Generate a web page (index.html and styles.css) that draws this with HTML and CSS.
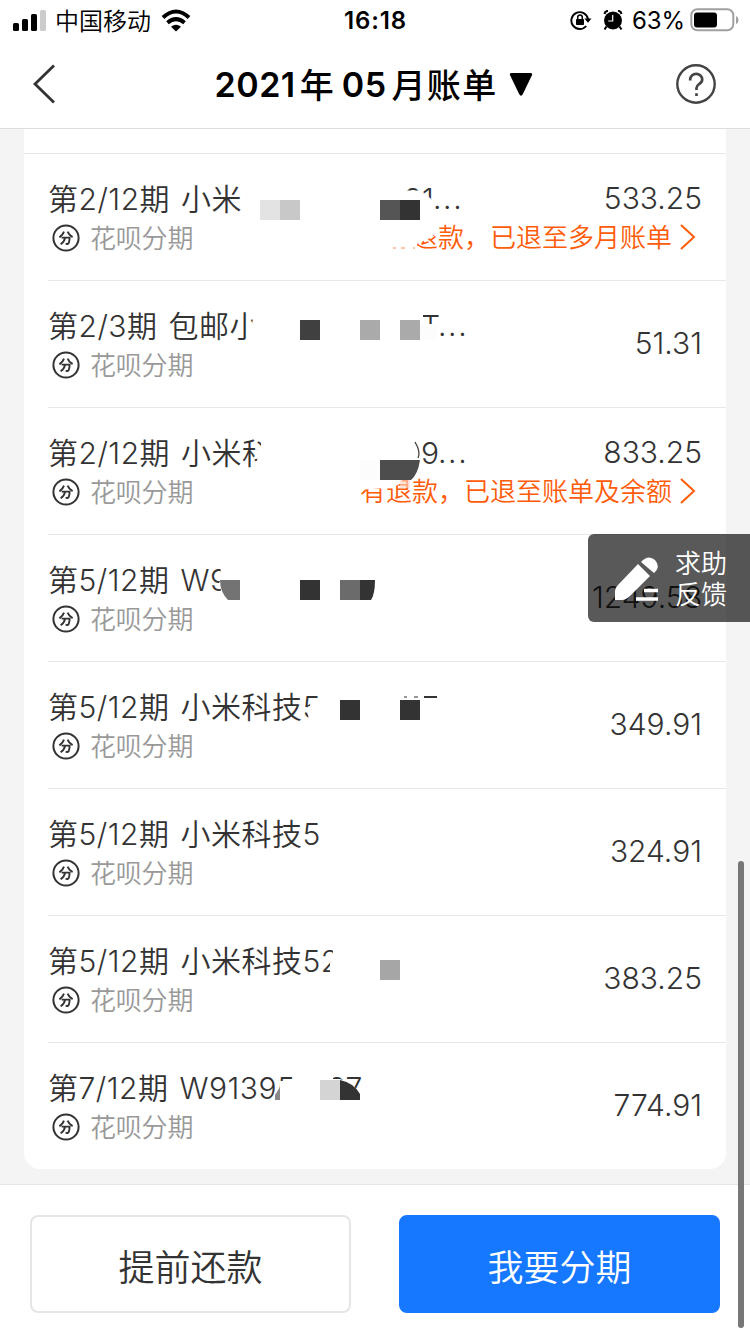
FILE: index.html
```html
<!DOCTYPE html>
<html lang="zh-CN">
<head>
<meta charset="utf-8">
<title>2021年05月账单</title>
<link rel="stylesheet" href="styles.css">
</head>
<body>
<svg class="defs" width="0" height="0"><defs>
<symbol id="fen" viewBox="0 0 28 28"><circle cx="14" cy="14" r="12.6" fill="none" stroke="#333" stroke-width="2"/><path d="M12 7.6Q10.8 11 7.4 13.4M15.6 7.6Q17 11.2 20.6 13.2M9.6 13.6H17.6Q17.4 19 16 19.8Q15 20.2 13.6 19.7M13 13.8Q12.4 18 8.6 20.2" fill="none" stroke="#333" stroke-width="1.9"/></symbol>
<symbol id="more" viewBox="0 0 16 26"><path d="M1 1L14 13L1 25" fill="none" stroke="#ff5c0a" stroke-width="2"/></symbol>
</defs></svg>
<div class="screen">
  <header class="status">
    <div class="status-left">
      <svg width="34" height="22" viewBox="0 0 34 22"><rect x="1" y="14" width="6" height="8" rx="1.5"/><rect x="10" y="10" width="6" height="12" rx="1.5"/><rect x="19" y="5" width="6" height="17" rx="1.5"/><rect x="28" y="1" width="6" height="21" rx="1.5" fill="#ccc"/></svg>
      <span class="carrier">中国移动</span>
      <svg class="wifi" width="30" height="23" viewBox="0 0 30 23"><path d="M2 8.5Q15-3.5 28 8.5M6.5 13.8Q15 6.5 23.5 13.8" fill="none" stroke="#000" stroke-width="4"/><path d="M10 17.8Q15 13.5 20 17.8L15 22.5Z"/></svg>
    </div>
    <span class="clock">16:18</span>
    <div class="status-right">
      <svg width="22" height="20" viewBox="0 0 22 20"><path d="M16.2 16A8.4 8.4 0 1 1 18 9" fill="none" stroke="#000" stroke-width="1.9"/><path d="M14.3 8.5H21.5L18 12.8Z"/><rect x="6" y="9" width="8" height="6" rx=".8"/><path d="M7.7 9V7.2A2.3 2.3 0 0 1 12.3 7.2V9" fill="none" stroke="#000" stroke-width="1.5"/></svg>
      <svg class="alarm" width="20" height="20" viewBox="0 0 20 20"><circle cx="10" cy="10.5" r="9"/><path d="M1.5 4Q2 1 5 .8M18.5 4Q18 1 15 .8M3.5 16.5L1.5 19.5M16.5 16.5L18.5 19.5" fill="none" stroke="#000" stroke-width="2"/><path d="M9.7 5V11H5.2" fill="none" stroke="#fff" stroke-width="1.2"/></svg>
      <span class="percent">63%</span>
      <svg width="50" height="24" viewBox="0 0 50 24"><rect x="1.3" y="1.3" width="42" height="21" rx="6" fill="none" stroke="#a0a0a0" stroke-width="2"/><rect x="4" y="4.5" width="23" height="15" rx="3"/><path d="M46 8Q48.5 9 48.5 12T46 16Z" fill="#a0a0a0"/></svg>
    </div>
  </header>
  <nav class="nav">
    <svg width="24" height="40" viewBox="0 0 24 40"><path d="M22 1.5L3 20L22 38.5" fill="none" stroke="#333" stroke-width="2.8"/></svg>
    <h1 class="heading"><span class="h-year">2021</span><span>年</span><span class="h-month">05</span><span class="h-rest">月账单</span><svg width="24" height="25" viewBox="0 0 24 25"><path d="M2.5 1H21.5Q24 1 22.8 3.5L14 21.8Q12 25.5 10 21.8L1.2 3.5Q0 1 2.5 1Z"/></svg></h1>
    <svg width="40" height="40" viewBox="0 0 40 40"><circle cx="20" cy="20" r="18.7" fill="none" stroke="#444" stroke-width="2.4"/><path d="M14.2 16.5V15.5A6 5.6 0 0 1 26.2 15.5Q26.2 18.3 23.2 20Q20.5 21.8 20.5 24V26M20.5 29.2V32" fill="none" stroke="#444" stroke-width="2.7"/></svg>
  </nav>
  <main class="content">
    <section class="card">
      <div class="previous"></div>
      <article class="row first">
        <div class="info"><div class="name">第2/12期 小米</div><div class="kind"><svg><use href="#fen"/></svg>花呗分期</div></div>
        <div class="side"><div class="amount">533.25</div><div class="note">有退款，已退至多月账单<svg><use href="#more"/></svg></div></div>
        <svg class="mosaic" viewBox="24 153 702 127"><text x="404" y="210">91</text><text x="433" y="209" letter-spacing="1.6">...</text><path d="M400 190.5H418L422 193L427 195L432 200V216H400Z" fill="#fff"/><path d="M380 220H437V232L430 238L417 244L419 254H380Z" fill="#fff"/><path d="M393 248h3M401 248h4M413 248h2" stroke="#ff8a50"/><path fill="#e3e3e3" d="M260 200h20v20h-20z"/><path fill="#c8c8c8" d="M280 200h20v20h-20z"/><path fill="#555" d="M380 200h20v20h-20z"/><path fill="#333" d="M400 200h20v20h-20z"/></svg>
      </article>
      <article class="row">
        <div class="info"><div class="name">第2/3期 包邮小</div><div class="kind"><svg><use href="#fen"/></svg>花呗分期</div></div>
        <div class="side"><div class="amount">51.31</div></div>
        <svg class="mosaic" viewBox="24 280 702 127"><text x="421" y="337">T</text><text x="438" y="336" letter-spacing="1.6">...</text><path d="M254 310H262V345H248V323L252 325Z" fill="#fff"/><path fill="#fcfcfc" d="M420 324h17v16h-17z"/><path fill="#fff" d="M418 312h5v10h-5z"/><path fill="#404040" d="M300 320h20v20h-20z"/><path fill="#aaa" d="M360 320h20v20h-20zM400 320h20v20h-20z"/></svg>
      </article>
      <article class="row">
        <div class="info"><div class="name">第2/12期 小米科</div><div class="kind"><svg><use href="#fen"/></svg>花呗分期</div></div>
        <div class="side"><div class="amount">833.25</div><div class="note">有退款，已退至账单及余额<svg><use href="#more"/></svg></div></div>
        <svg class="mosaic" viewBox="24 407 702 127"><text x="421" y="464">9</text><text x="438" y="463" letter-spacing="1.6">...</text><path d="M261 435H276V472H256V462L259 456L255 451L261 447Z" fill="#fff"/><path d="M358 474H402V482Q397 487 387 488L358 490Z" fill="#fff"/><path d="M415 442Q421 452 418 458" fill="none" stroke="#333" stroke-width="1.2"/><path fill="#fcfcfc" d="M360 460h20v20h-20z"/><path fill="#4d4d4d" d="M380 460H420Q418 474 411 480H380Z"/><path fill="#ffd6c5" fill-opacity=".6" d="M400 480h10v8h-10z"/></svg>
      </article>
      <article class="row">
        <div class="info"><div class="name">第5/12期 W9</div><div class="kind"><svg><use href="#fen"/></svg>花呗分期</div></div>
        <div class="side"><div class="amount">1249.58</div></div>
        <svg class="mosaic" viewBox="24 534 702 127"><path d="M220.5 568H232V594H222L219 583L221 580Z" fill="#fff"/><path fill="#737373" d="M220 580H240V600H228Q220 592 220 580Z"/><path fill="#333" d="M300 580h20v20h-20zM360 580H375Q375 594 371 600H360Z"/><path fill="#6b6b6b" d="M340 580h20v20h-20z"/></svg>
      </article>
      <article class="row">
        <div class="info"><div class="name">第5/12期 小米科技5</div><div class="kind"><svg><use href="#fen"/></svg>花呗分期</div></div>
        <div class="side"><div class="amount">349.91</div></div>
        <svg class="mosaic" viewBox="24 661 702 127"><path d="M311 701H322V722H309L308 714Z" fill="#fff"/><path fill="#333" d="M340 700h20v20h-20zM400 700h20v20h-20zM424 696h13v2h-13zM404 696.5h3v1h-3zM414 696.5h4v1h-4z"/></svg>
      </article>
      <article class="row">
        <div class="info"><div class="name">第5/12期 小米科技5</div><div class="kind"><svg><use href="#fen"/></svg>花呗分期</div></div>
        <div class="side"><div class="amount">324.91</div></div>
      </article>
      <article class="row">
        <div class="info"><div class="name">第5/12期 小米科技52</div><div class="kind"><svg><use href="#fen"/></svg>花呗分期</div></div>
        <div class="side"><div class="amount">383.25</div></div>
        <svg class="mosaic" viewBox="24 915 702 127"><path d="M333 945H340V976H330V963L333 957Z" fill="#fff"/><path fill="#a6a6a6" d="M380 960h20v20h-20z"/></svg>
      </article>
      <article class="row">
        <div class="info"><div class="name">第7/12期 W91395</div><div class="kind"><svg><use href="#fen"/></svg>花呗分期</div></div>
        <div class="side"><div class="amount">774.91</div></div>
        <svg class="mosaic" viewBox="24 1042 702 127"><text x="328" y="1099">97</text><path d="M280 1081H294V1102H273V1100L275 1094L280 1090Z" fill="#fff"/><path d="M275 1100V1095L280 1087V1100Z" fill="#888"/><path d="M320 1070H333V1079L340 1079L350 1083L360 1092V1103H320Z" fill="#fff"/><path fill="#d4d4d4" d="M320 1080h20v20h-20z"/><path fill="#333" d="M340 1080Q354 1083 360 1094V1100H340Z"/></svg>
      </article>
    </section>
    <div class="scrollbar"></div>
    <aside class="feedback"><svg width="46" height="48" viewBox="0 0 46 48"><path d="M24 9L36 21L17 40Q12 45 8 45L1 45V36Q1 33 4 30Z" fill="#fff"/><path d="M27 7Q34 -1 41 5Q47 12 40 18Z" fill="#fff"/><path d="M30 35.5H44M22 44H44" stroke="#fff" stroke-width="3.4"/></svg><div>求助<br>反馈</div></aside>
  </main>
  <footer class="actions"><button class="btn">提前还款</button><button class="btn primary">我要分期</button></footer>
</div>
</body>
</html>
```
FILE: styles.css
```css
* { box-sizing: border-box; }
body { margin: 0; font-family: Inter, "Noto Sans CJK SC", sans-serif; color: #333; }
.defs { position: absolute; }
.screen { width: 750px; height: 1334px; display: flex; flex-direction: column; overflow: hidden; background: #fff; }
.status { height: 40px; display: grid; grid-template-columns: 1fr auto 1fr; align-items: center; padding: 0 10px 0 12px; color: #000; }
.status-left, .status-right { display: flex; align-items: center; }
.status-right { justify-content: flex-end; }
.carrier { font-size: 24px; line-height: 34px; padding-top: 3px; margin-left: 9px; font-weight: 350; }
.wifi { margin-left: 10px; }
.clock { font-size: 24px; font-weight: 600; letter-spacing: .9px; margin-left: -1px; }
.alarm { margin-left: 11px; }
.percent { font-size: 24px; margin: 0 5px 0 9px; letter-spacing: -.1px; }
.nav { height: 89px; border-bottom: 1px solid #ddd; display: flex; justify-content: space-between; align-items: center; padding: 0 34px 0 32px; }
.heading { margin: 0 0 0 16px; display: flex; align-items: center; font-size: 34px; line-height: 46px; font-weight: 600; color: #000; }
.heading span { font-weight: 500; padding-top: 3px; }
.heading .h-year, .heading .h-month { font-weight: 600; letter-spacing: .5px; padding-top: 2px; }
.h-year { margin-right: 4px; }
.h-month { margin: 0 5px 0 8px; }
.h-rest { letter-spacing: 1.3px; }
.heading svg { margin-left: 12px; }
.content { position: relative; height: 1055px; background: #f4f4f4; padding: 0 24px; }
.card { height: 1040px; background: #fff; border-radius: 0 0 16px 16px; overflow: hidden; }
.previous { height: 24px; }
.row { position: relative; height: 127px; display: flex; justify-content: space-between; padding: 25px 24px 0; }
.row::before { content: ""; position: absolute; left: 24px; right: 0; top: 0; height: 1px; background: #e8e8e8; }
.row.first::before { left: 0; }
.name { font-size: 30px; line-height: 42px; font-weight: 350; letter-spacing: .5px; word-spacing: 2px; white-space: nowrap; }
.kind { display: flex; align-items: center; gap: 10px; padding: 2px 0 0 4px; height: 36px; line-height: 32px; font-size: 26px; font-weight: 350; letter-spacing: -.2px; color: #999; }
.kind svg { width: 28px; height: 28px; margin-top: -2px; }
.side { height: 76px; display: flex; flex-direction: column; justify-content: center; align-items: flex-end; }
.amount { font-size: 30px; line-height: 40px; font-weight: 350; }
.note { display: flex; align-items: center; height: 36px; line-height: 32px; padding: 4px 6px 0 0; font-size: 26px; font-weight: 350; color: #ff5c0a; white-space: nowrap; }
.note svg { width: 16px; height: 26px; margin-left: 8px; margin-top: -3px; }
.mosaic { position: absolute; left: 0; top: 0; width: 702px; height: 127px; font-size: 30px; font-weight: 350; fill: #333; }
.scrollbar { position: absolute; left: 738px; top: 732px; width: 6px; height: 467px; border-radius: 3px; background: #777; z-index: 3; }
.feedback { position: absolute; right: 0; top: 405px; width: 162px; height: 88px; display: flex; align-items: center; gap: 15px; padding: 1px 0 0 26px; border-radius: 6px 0 0 6px; background: rgba(0,0,0,.65); color: #fff; font-size: 26px; line-height: 31px; font-weight: 350; }
.actions { height: 150px; border-top: 1px solid #e5e5e5; display: flex; gap: 48px; padding: 30px 30px 21px; background: #fff; }
.btn { flex: 1; height: 98px; padding: 2px 0 0; border: 2px solid #e5e5e5; border-radius: 8px; background: #fff; font: 350 36px Inter, "Noto Sans CJK SC", sans-serif; color: #333; }
.primary { border-color: #1677ff; background: #1677ff; color: #fff; }
```
